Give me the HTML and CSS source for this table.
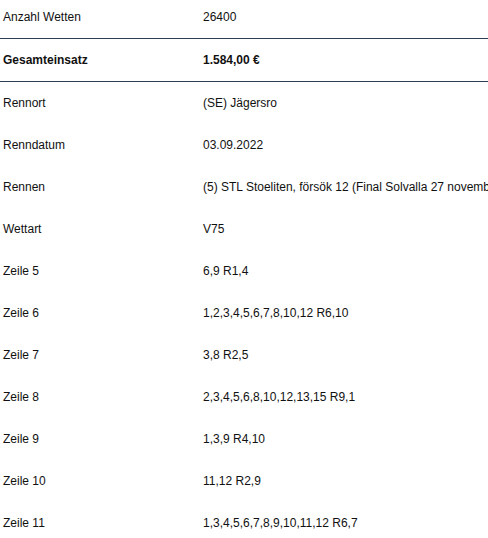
FILE: index.html
```html
<!DOCTYPE html>
<html lang="de">
<head>
<meta charset="utf-8">
<title>Wettdetails</title>
<link rel="stylesheet" href="styles.css">
</head>
<body>
<div class="details">
  <div class="row row-first row-sep"><span class="label">Anzahl Wetten</span><span class="value">26400</span></div>
  <div class="row row-sep row-total"><span class="label">Gesamteinsatz</span><span class="value">1.584,00 €</span></div>
  <div class="row"><span class="label">Rennort</span><span class="value">(SE) Jägersro</span></div>
  <div class="row"><span class="label">Renndatum</span><span class="value">03.09.2022</span></div>
  <div class="row"><span class="label">Rennen</span><span class="value">(5) STL Stoeliten, försök 12 (Final Solvalla 27 november)</span></div>
  <div class="row"><span class="label">Wettart</span><span class="value">V75</span></div>
  <div class="row"><span class="label">Zeile 5</span><span class="value">6,9 R1,4</span></div>
  <div class="row"><span class="label">Zeile 6</span><span class="value">1,2,3,4,5,6,7,8,10,12 R6,10</span></div>
  <div class="row"><span class="label">Zeile 7</span><span class="value">3,8 R2,5</span></div>
  <div class="row"><span class="label">Zeile 8</span><span class="value">2,3,4,5,6,8,10,12,13,15 R9,1</span></div>
  <div class="row"><span class="label">Zeile 9</span><span class="value">1,3,9 R4,10</span></div>
  <div class="row"><span class="label">Zeile 10</span><span class="value">11,12 R2,9</span></div>
  <div class="row"><span class="label">Zeile 11</span><span class="value">1,3,4,5,6,7,8,9,10,11,12 R6,7</span></div>
</div>
</body>
</html>
```
FILE: styles.css
```css
html, body {
  margin: 0;
  padding: 0;
  overflow: hidden;
  background: #ffffff;
}
body {
  font-family: "Liberation Sans", Arial, sans-serif;
  font-size: 12px;
  color: #111111;
}
.details {
  display: flex;
  flex-direction: column;
  width: 100%;
}
.row {
  display: grid;
  grid-template-columns: 200px 1fr;
  align-items: center;
  height: 42px;
  white-space: nowrap;
}
.row-first {
  align-items: start;
  padding-top: 10px;
  height: 28px;
}
.row-sep {
  border-bottom: 1px solid #2c3e50;
}
.row-total {
  font-weight: bold;
}
.label {
  padding-left: 3px;
  overflow: hidden;
}
.value {
  padding-left: 3px;
}
```
